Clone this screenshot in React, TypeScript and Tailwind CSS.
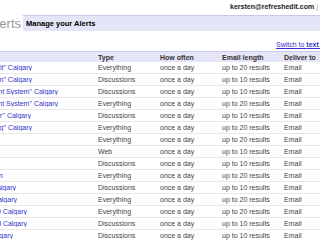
import React from 'react';

interface Alert {
  query: string;
  // the first column is cut off at the left edge, so each query is
  // right-aligned inside a box that ends where its visible tail ends
  end: string;
  type: 'Everything' | 'Discussions' | 'Web';
  length: string;
}

const alerts: Alert[] = [
  { query: '"Refreshed Edit" Calgary', end: 'w-[32px]', type: 'Everything', length: 'up to 20 results' },
  { query: '"Web Design" Calgary', end: 'w-[32px]', type: 'Discussions', length: 'up to 10 results' },
  { query: '"Content Management System" Calgary', end: 'w-[58px]', type: 'Discussions', length: 'up to 10 results' },
  { query: '"Content Management System" Calgary', end: 'w-[58px]', type: 'Everything', length: 'up to 20 results' },
  { query: '"Web Developer" Calgary', end: 'w-[31px]', type: 'Discussions', length: 'up to 10 results' },
  { query: '"Web Hosting" Calgary', end: 'w-[32px]', type: 'Everything', length: 'up to 20 results' },
  { query: '', end: 'w-0', type: 'Everything', length: 'up to 20 results' },
  { query: '', end: 'w-0', type: 'Web', length: 'up to 10 results' },
  { query: '', end: 'w-0', type: 'Discussions', length: 'up to 10 results' },
  { query: 'Kersten', end: 'w-[3px]', type: 'Everything', length: 'up to 20 results' },
  { query: 'Web Design Calgary', end: 'w-[16px]', type: 'Discussions', length: 'up to 10 results' },
  { query: 'Website Calgary', end: 'w-[17px]', type: 'Everything', length: 'up to 20 results' },
  { query: 'SEO Calgary', end: 'w-[27px]', type: 'Everything', length: 'up to 20 results' },
  { query: 'Drupal Calgary', end: 'w-[27px]', type: 'Discussions', length: 'up to 10 results' },
  { query: 'Joomla Calgary', end: 'w-[13px]', type: 'Discussions', length: 'up to 10 results' },
];

export default function App() {
  return (
    <div className="w-[320px] h-[240px] overflow-hidden bg-white font-['Liberation_Sans',Arial,sans-serif] text-[7px] leading-none text-[#444]">
      {/* Account links */}
      <div className="flex h-[12px] items-center pl-[230px] whitespace-nowrap text-[#222]">
        <span className="font-bold">kersten@refreshedit.com</span>
        <span className="mx-[2px] text-[#999]">|</span>
        <a className="text-[#3333cc] underline">Settings</a>
      </div>

      {/* Logo + title bar */}
      <div className="flex items-center h-[20px] mt-[1px]">
        <div className="flex justify-end overflow-hidden w-[21px] text-[13px] text-[#9a9a9a] whitespace-nowrap">
          Alerts
        </div>
        <div className="flex-1 h-[16px] ml-[2px] flex items-center pl-[3px] bg-[#e5e5f8] border-t border-[#c9c9ee] font-bold text-[7.5px] text-black">
          Manage your Alerts
        </div>
      </div>

      {/* Section heading */}
      <div className="flex items-end h-[18px] pb-[3px] whitespace-nowrap">
        <div className="flex justify-end overflow-hidden w-[8px] font-bold text-black">Alerts</div>
        <a className="ml-[276px] text-[#3333cc] underline">
          Switch to <span className="font-bold">text</span> version
        </a>
      </div>

      {/* Table */}
      <div className="grid grid-cols-[98px_62px_62px_62px_1fr] h-[11px] items-center bg-[#e5e5f8] border-t border-[#c9c9ee] font-bold text-[#333] whitespace-nowrap">
        <div />
        <div>Type</div>
        <div>How often</div>
        <div>Email length</div>
        <div>Deliver to</div>
      </div>
      {alerts.map((a, i) => (
        <div
          key={i}
          className="grid grid-cols-[98px_62px_62px_62px_1fr] h-[12px] items-center border-b border-[#e8e8e8] whitespace-nowrap"
        >
          <div className={`flex justify-end overflow-hidden ${a.end}`}>
            <a className="text-[#3333cc] underline">{a.query}</a>
          </div>
          <div>{a.type}</div>
          <div>once a day</div>
          <div>{a.length}</div>
          <div>Email</div>
        </div>
      ))}
    </div>
  );
}
